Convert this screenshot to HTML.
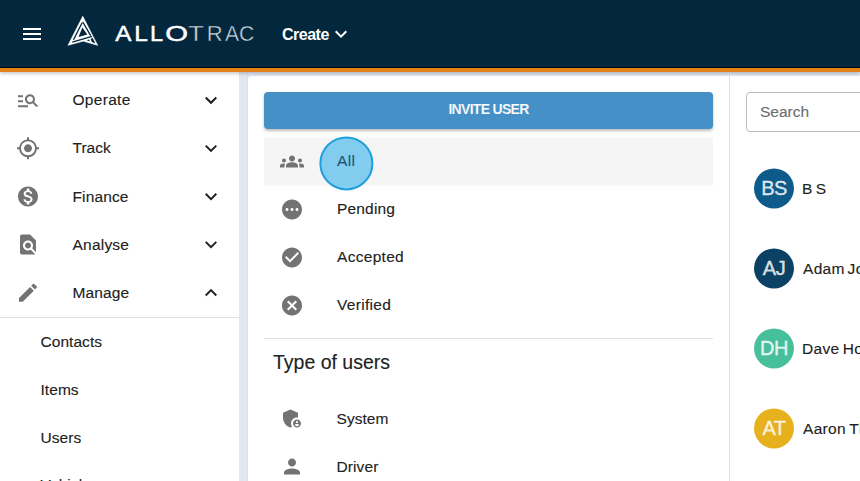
<!DOCTYPE html>
<html lang="en">
<head>
<meta charset="utf-8">
<title>Allotrac - Users</title>
<style>
*{box-sizing:border-box;margin:0;padding:0}
html,body{width:860px;height:481px;overflow:hidden}
body{font-family:"Liberation Sans",sans-serif;font-size:16px;color:#212121;background:#e1e8f2;position:relative}
.hdr{position:absolute;left:0;top:0;width:860px;height:72px;background:#03283e;border-bottom:4px solid #e8801a;z-index:10;box-shadow:0 1px 4px rgba(0,0,0,.28),inset 0 -1px 0 #010a10}
.burger{position:absolute;left:23px;top:28px;width:18px;height:12px}
.burger i{position:absolute;left:0;width:18px;height:2px;background:#fff}
.logo{position:absolute;left:66px;top:14px}
.brand{position:absolute;left:115px;top:15px}
.brand b{font-weight:normal}
.brand span{color:#c9d3da}
.create{position:absolute;left:282px;top:25px;font-size:16px;font-weight:bold;color:#fff;line-height:20px;letter-spacing:-.5px}
.side{position:absolute;left:0;top:72px;width:239px;height:409px;background:#fff}
.gap{position:absolute;left:239px;top:72px;width:9px;height:409px;background:linear-gradient(90deg,#e5e7ea 0,#e3e8f0 45%,#e0e9f4 85%,#d3dae4 100%)}
.nav{position:absolute;left:0;width:239px;height:48px}
.nav .t{position:absolute;left:72.500px;top:14px;line-height:20px;font-size:15.5px;letter-spacing:.3px;color:#212121;-webkit-text-stroke:.12px #212121}
.nav svg.ic{position:absolute;left:16px;top:12px;width:24px;height:24px}
.nav svg.ch{position:absolute;left:199px;top:12px;width:24px;height:24px}
.sub{position:absolute;left:40.500px;line-height:20px;font-size:15.5px;letter-spacing:.05px;color:#212121;-webkit-text-stroke:.12px #212121}
.sdiv{position:absolute;left:0;top:245px;width:239px;height:1px;background:#e0e0e0}
.card{position:absolute;left:248px;top:76px;width:620px;height:420px;background:#fff;border-radius:4px}
.vline{position:absolute;left:729px;top:76px;width:1px;height:420px;background:#e0e0e0}
.btn{position:absolute;left:264px;top:92px;width:449px;height:37px;background:#4591c7;border-radius:4px;color:#fff;font-weight:bold;font-size:14px;text-align:center;line-height:34.500px;box-shadow:0 2px 3px rgba(0,0,0,.25);letter-spacing:-.7px;-webkit-text-stroke:.15px #4591c7}
.row{position:absolute;left:264px;width:449px;height:48px;transform:translateY(.5px)}
.row.sel{background:#f5f5f5}
.row .t{position:absolute;left:73px;top:13px;line-height:20px;font-size:15.5px;letter-spacing:.3px;color:#212121;-webkit-text-stroke:.12px #212121}
.row svg{position:absolute;left:16px;top:12px;width:24px;height:24px}
.hl{z-index:2;position:absolute;left:319px;top:136px;transform:translate(.4px,.4px);width:54px;height:54px;border-radius:50%;background:rgba(86,190,237,.72);border:2px solid #1f9fdb}
.hdiv{position:absolute;left:264px;top:338px;width:449px;height:1px;background:#e0e0e0}
.h2{position:absolute;left:273px;top:350px;font-size:19.5px;line-height:24px;color:#212121;-webkit-text-stroke:.12px #212121;transform:translateY(.4px)}
.search{position:absolute;left:746px;top:92px;width:130px;height:40px;border:1px solid #bdbdbd;border-radius:4px;background:#fff}
.search span{position:absolute;left:13px;top:9px;line-height:20px;font-size:15.5px;color:#6b6b6b;-webkit-text-stroke:.1px #6b6b6b}
.av{position:absolute;left:754px;width:40px;height:40px;border-radius:50%;color:rgba(255,255,255,.84);font-size:20px;text-align:center;line-height:40px;letter-spacing:-.5px;-webkit-text-stroke:.35px rgba(255,255,255,.84);transform:translateY(.4px)}
.nm{position:absolute;left:802px;line-height:20px;font-size:15.5px;letter-spacing:.3px;color:#212121;white-space:nowrap;-webkit-text-stroke:.12px #212121;transform:translateY(.75px)}
</style>
</head>
<body>
<div class="hdr">
  <div class="burger"><i style="top:0"></i><i style="top:5px"></i><i style="top:10px"></i></div>
  <svg class="logo" width="40" height="40" viewBox="0 0 40 40">
    <path fill="#fff" stroke="#fff" stroke-width=".4" d="M16.750 2.100 L1.800 31.400 L17.300 27.200 L31.800 31.400 Z"/>
    <g fill="#03283e" stroke="none">
      <path d="M16.400 13.500 L12.500 22.900 L21.300 20.500 Z"/>
      <path d="M24.600 24.700 L26.700 23.900 L29.400 29.500 L25.800 28 Z"/>
      <path d="M20.800 26.300 L23.300 25.600 L23.700 27.400 Z"/>
    </g>
    <g stroke="#03283e" fill="none" stroke-width="1.350">
      <path d="M16.100 8.800 L7.500 25.800"/>
      <path d="M16.800 8 L24.700 21.600"/>
      <path d="M6.300 28.200 L26.100 22.400"/>
    </g>
  </svg>
  <svg class="brand" width="160" height="40" viewBox="0 0 160 40" font-family="Liberation Sans, sans-serif" font-size="22.5"><title>ALLOTRAC</title><text y="25.8" fill="#fff" stroke="#fff" stroke-width=".45"><tspan x="0.15" textLength="16.19" lengthAdjust="spacingAndGlyphs">A</tspan><tspan x="19.19" textLength="13.62" lengthAdjust="spacingAndGlyphs">L</tspan><tspan x="34.97" textLength="13.12" lengthAdjust="spacingAndGlyphs">L</tspan><tspan x="50.31" textLength="22.79" lengthAdjust="spacingAndGlyphs">O</tspan><tspan fill="#cfd8de" stroke="#03283e" stroke-width=".45"><tspan x="72.91" textLength="15.99" lengthAdjust="spacingAndGlyphs">T</tspan><tspan x="91.69" textLength="15.93" lengthAdjust="spacingAndGlyphs">R</tspan><tspan x="110.06" textLength="14.08" lengthAdjust="spacingAndGlyphs">A</tspan><tspan x="123.93" textLength="15.28" lengthAdjust="spacingAndGlyphs">C</tspan></tspan></text></svg>
  <div class="create">Create</div>
  <svg style="position:absolute;left:329px;top:22px" width="24" height="24" viewBox="0 0 24 24" fill="#fff"><path d="M16.590 8.590L12 13.170 7.410 8.590 6 10l6 6 6-6z"/></svg>
</div>

<div class="side">
  <div class="nav" style="top:4px;transform:translateY(0.2px)">
    <svg class="ic" viewBox="0 0 24 24" fill="#737373"><path d="M7 9H2V7h5v2zm0 3H2v2h5v-2zm13.590 7-3.830-3.830c-.8.520-1.740.830-2.760.830-2.760 0-5-2.240-5-5s2.240-5 5-5 5 2.240 5 5c0 1.020-.31 1.960-.83 2.750L22 17.590 20.590 19zM17 11c0-1.650-1.350-3-3-3s-3 1.350-3 3 1.350 3 3 3 3-1.350 3-3zM2 19h10v-2H2v2z"/></svg>
    <span class="t">Operate</span>
    <svg class="ch" viewBox="0 0 24 24" fill="#212121"><path d="M16.590 8.590L12 13.170 7.410 8.590 6 10l6 6 6-6z"/></svg>
  </div>
  <div class="nav" style="top:52px;transform:translateY(0.35px)">
    <svg class="ic" viewBox="0 0 24 24" fill="#737373"><path d="M12 8c-2.21 0-4 1.79-4 4s1.790 4 4 4 4-1.790 4-4-1.790-4-4-4zm8.940 3A8.994 8.994 0 0 0 13 3.060V1h-2v2.060A8.994 8.994 0 0 0 3.060 11H1v2h2.060A8.994 8.994 0 0 0 11 20.940V23h2v-2.060A8.994 8.994 0 0 0 20.940 13H23v-2h-2.060zM12 19c-3.870 0-7-3.130-7-7s3.130-7 7-7 7 3.130 7 7-3.130 7-7 7z"/></svg>
    <span class="t" style="letter-spacing:0">Track</span>
    <svg class="ch" viewBox="0 0 24 24" fill="#212121"><path d="M16.590 8.590L12 13.170 7.410 8.590 6 10l6 6 6-6z"/></svg>
  </div>
  <div class="nav" style="top:100px;transform:translateY(0.5px)">
    <svg class="ic" viewBox="0 0 24 24" fill="#737373"><path d="M12 2C6.480 2 2 6.480 2 12s4.480 10 10 10 10-4.480 10-10S17.520 2 12 2zm1.410 16.090V20h-2.670v-1.930c-1.710-.36-3.160-1.460-3.270-3.400h1.960c.1 1.050.82 1.870 2.650 1.870 1.960 0 2.400-.98 2.400-1.590 0-.83-.44-1.610-2.670-2.140-2.480-.6-4.180-1.620-4.180-3.670 0-1.720 1.390-2.840 3.110-3.210V4h2.670v1.950c1.860.45 2.790 1.860 2.850 3.390H14.300c-.05-1.110-.64-1.870-2.220-1.870-1.500 0-2.400.68-2.400 1.640 0 .84.650 1.390 2.670 1.910s4.180 1.390 4.180 3.910c-.01 1.830-1.380 2.830-3.120 3.160z"/></svg>
    <span class="t" style="letter-spacing:.13px">Finance</span>
    <svg class="ch" viewBox="0 0 24 24" fill="#212121"><path d="M16.590 8.590L12 13.170 7.410 8.590 6 10l6 6 6-6z"/></svg>
  </div>
  <div class="nav" style="top:148px;transform:translateY(0.6px)">
    <svg class="ic" viewBox="0 0 24 24" fill="#737373"><path d="M20 19.590V8l-6-6H6c-1.100 0-1.990.9-1.990 2L4 20c0 1.100.89 2 1.990 2H18c.45 0 .85-.15 1.190-.4l-4.430-4.430c-.8.520-1.740.830-2.760.830-2.760 0-5-2.240-5-5s2.240-5 5-5 5 2.240 5 5c0 1.020-.31 1.960-.83 2.750L20 19.590zM9 13c0 1.660 1.340 3 3 3s3-1.340 3-3-1.340-3-3-3-3 1.340-3 3z"/></svg>
    <span class="t" style="letter-spacing:.22px">Analyse</span>
    <svg class="ch" viewBox="0 0 24 24" fill="#212121"><path d="M16.590 8.590L12 13.170 7.410 8.590 6 10l6 6 6-6z"/></svg>
  </div>
  <div class="nav" style="top:196px;transform:translateY(0.75px)">
    <svg class="ic" viewBox="0 0 24 24" fill="#737373"><path d="M3 17.250V21h3.750L17.810 9.940l-3.750-3.750L3 17.250zM20.710 7.040a.996.996 0 0 0 0-1.410l-2.340-2.340a.996.996 0 0 0-1.410 0l-1.830 1.830 3.750 3.750 1.830-1.830z"/></svg>
    <span class="t" style="letter-spacing:.1px">Manage</span>
    <svg class="ch" viewBox="0 0 24 24" fill="#212121"><path d="M12 8l-6 6 1.410 1.410L12 10.830l4.590 4.580L18 14z"/></svg>
  </div>
  <div class="sdiv"></div>
  <div class="sub" style="top:260px">Contacts</div>
  <div class="sub" style="top:308px">Items</div>
  <div class="sub" style="top:356px">Users</div>
  <div class="sub" style="top:403px">Vehicles</div>
</div>

<div class="gap"></div>
<div class="card"></div>
<div class="vline"></div>
<div class="btn">INVITE USER</div>

<div class="row sel" style="top:137px">
  <svg viewBox="0 0 24 24" fill="#737373"><path d="M12 12.750c1.630 0 3.070.390 4.240.9 1.080.480 1.760 1.560 1.760 2.730V18H6v-1.610c0-1.180.680-2.260 1.760-2.730 1.170-.52 2.610-.91 4.240-.91zM4 13c1.100 0 2-.9 2-2s-.9-2-2-2-2 .9-2 2 .9 2 2 2zm1.130 1.100c-.37-.06-.74-.1-1.130-.1-.99 0-1.930.210-2.780.580C.480 14.900 0 15.620 0 16.430V18h4.500v-1.610c0-.83.230-1.610.63-2.290zM20 13c1.100 0 2-.9 2-2s-.9-2-2-2-2 .9-2 2 .9 2 2 2zm4 3.430c0-.81-.48-1.530-1.220-1.850-.85-.37-1.790-.58-2.780-.58-.39 0-.76.040-1.130.1.400.680.630 1.460.630 2.290V18H24v-1.570zM12 6c1.660 0 3 1.340 3 3s-1.340 3-3 3-3-1.340-3-3 1.340-3 3-3z"/></svg>
</div>
<div class="row" style="top:185px">
  <svg viewBox="0 0 24 24" fill="#737373"><path d="M12 2C6.480 2 2 6.480 2 12s4.480 10 10 10 10-4.480 10-10S17.520 2 12 2zM7 13.500c-.83 0-1.500-.67-1.500-1.500s.67-1.500 1.500-1.500 1.500.67 1.500 1.500-.67 1.500-1.500 1.500zm5 0c-.83 0-1.500-.67-1.500-1.500s.67-1.500 1.500-1.500 1.500.67 1.500 1.500-.67 1.500-1.500 1.500zm5 0c-.83 0-1.500-.67-1.500-1.500s.67-1.500 1.500-1.500 1.500.67 1.500 1.500-.67 1.500-1.500 1.500z"/></svg>
  <span class="t" style="letter-spacing:.17px">Pending</span>
</div>
<div class="row" style="top:233px">
  <svg viewBox="0 0 24 24" fill="#737373"><path d="M12 2C6.480 2 2 6.480 2 12s4.480 10 10 10 10-4.480 10-10S17.520 2 12 2zm-2 15l-5-5 1.410-1.410L10 14.170l7.590-7.590L19 8l-9 9z"/></svg>
  <span class="t">Accepted</span>
</div>
<div class="row" style="top:281px">
  <svg viewBox="0 0 24 24" fill="#737373"><path d="M12 2C6.470 2 2 6.470 2 12s4.470 10 10 10 10-4.470 10-10S17.530 2 12 2zm5 13.590L15.590 17 12 13.410 8.410 17 7 15.590 10.590 12 7 8.410 8.410 7 12 10.590 15.590 7 17 8.410 13.410 12 17 15.590z"/></svg>
  <span class="t">Verified</span>
</div>
<div class="hl"></div>
<div class="row" style="top:137px;z-index:3"><span class="t" style="color:#1d5473;-webkit-text-stroke:.12px #1d5473">All</span></div>
<div class="hdiv"></div>
<div class="h2">Type of users</div>
<div class="row" style="top:394px">
  <svg viewBox="0 0 24 24" fill="#737373"><path d="M17 11c.34 0 .67.040 1 .090V6.270L10.500 3 3 6.270v4.910c0 4.540 3.200 8.790 7.500 9.820.55-.13 1.080-.32 1.600-.55-.69-.98-1.100-2.170-1.100-3.450 0-3.310 2.690-6 6-6z"/><path d="M17 13c-2.210 0-4 1.790-4 4s1.790 4 4 4 4-1.790 4-4-1.790-4-4-4zm0 1.380c.62 0 1.120.51 1.120 1.120s-.51 1.120-1.120 1.120-1.120-.51-1.120-1.120.5-1.120 1.120-1.120zm0 5.370c-.93 0-1.740-.46-2.240-1.170.05-.72 1.510-1.080 2.240-1.080s2.190.36 2.240 1.080c-.5.710-1.310 1.170-2.240 1.170z"/></svg>
  <span class="t" style="top:13.800px;letter-spacing:.05px;left:72.500px">System</span>
</div>
<div class="row" style="top:442px">
  <svg viewBox="0 0 24 24" fill="#737373"><path d="M12 12c2.210 0 4-1.790 4-4s-1.790-4-4-4-4 1.790-4 4 1.790 4 4 4zm0 2c-2.670 0-8 1.340-8 4v2h16v-2c0-2.660-5.330-4-8-4z"/></svg>
  <span class="t" style="top:14px;letter-spacing:.1px;left:72.500px">Driver</span>
</div>

<div class="search"><span>Search</span></div>
<div class="av" style="top:168px;background:#0d5b8a">BS</div><div class="nm" style="top:178px;word-spacing:-1.500px">B S</div>
<div class="av" style="top:248px;background:#0b4165">AJ</div><div class="nm" style="top:258px;left:803px;word-spacing:-1.700px">Adam Jones</div>
<div class="av" style="top:328px;background:#48bf9b">DH</div><div class="nm" style="top:338px;word-spacing:-1.200px">Dave Holmes</div>
<div class="av" style="top:408px;background:#e6b11c">AT</div><div class="nm" style="top:418px;left:803px;word-spacing:-1px">Aaron Thomas</div>
</body>
</html>
